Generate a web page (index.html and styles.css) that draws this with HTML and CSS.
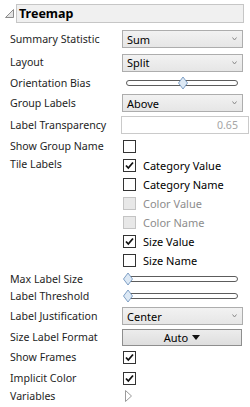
FILE: index.html
```html
<!DOCTYPE html>
<html lang="en">
<head>
  <meta charset="UTF-8">
  <meta name="viewport" content="width=device-width, initial-scale=1.0">
  <title>Treemap options</title>
  <link rel="stylesheet" href="styles.css">
</head>
<body>
  <div class="panel">
    <div class="header">
      <svg class="disclose" width="9" height="9" viewBox="0 0 9 9"><path d="M8.5 0.5 L8.5 8.5 L0.5 8.5 Z" fill="#e4e4e4" stroke="#8c8c8c"/></svg>
      <div class="title">Treemap</div>
    </div>

    <div class="rows">
      <div class="row h24">
        <span class="label">Summary Statistic</span>
        <div class="select">Sum<svg class="chev" width="5" height="4" viewBox="0 0 5 4"><path d="M0.5 0.5 L2.5 3 L4.5 0.5" fill="none" stroke="#8a8a8a"/></svg></div>
      </div>
      <div class="row h23">
        <span class="label">Layout</span>
        <div class="select">Split<svg class="chev" width="5" height="4" viewBox="0 0 5 4"><path d="M0.5 0.5 L2.5 3 L4.5 0.5" fill="none" stroke="#8a8a8a"/></svg></div>
      </div>
      <div class="row h18">
        <span class="label">Orientation Bias</span>
        <div class="slider"><span class="thumb" style="left: 50%"></span></div>
      </div>
      <div class="row h22">
        <span class="label">Group Labels</span>
        <div class="select">Above<svg class="chev" width="5" height="4" viewBox="0 0 5 4"><path d="M0.5 0.5 L2.5 3 L4.5 0.5" fill="none" stroke="#8a8a8a"/></svg></div>
      </div>
      <div class="row h22">
        <span class="label">Label Transparency</span>
        <div class="text-input">0.65</div>
      </div>
      <div class="row h20">
        <span class="label">Show Group Name</span>
        <div class="check"><span class="box"></span></div>
      </div>
      <div class="row tile">
        <span class="label">Tile Labels</span>
        <div class="check-list">
          <div class="check"><span class="box"><svg width="11" height="11" viewBox="0 0 11 11"><path d="M2 5.5 L4.3 8 L9 2.5" fill="none" stroke="#111" stroke-width="1.8"/></svg></span>Category Value</div>
          <div class="check"><span class="box"></span>Category Name</div>
          <div class="check off"><span class="box"></span>Color Value</div>
          <div class="check off"><span class="box"></span>Color Name</div>
          <div class="check"><span class="box"><svg width="11" height="11" viewBox="0 0 11 11"><path d="M2 5.5 L4.3 8 L9 2.5" fill="none" stroke="#111" stroke-width="1.8"/></svg></span>Size Value</div>
          <div class="check"><span class="box"></span>Size Name</div>
        </div>
      </div>
      <div class="row h18">
        <span class="label">Max Label Size</span>
        <div class="slider"><span class="thumb" style="left: 0%"></span></div>
      </div>
      <div class="row h16">
        <span class="label">Label Threshold</span>
        <div class="slider"><span class="thumb" style="left: 0%"></span></div>
      </div>
      <div class="row h24">
        <span class="label">Label Justification</span>
        <div class="select">Center<svg class="chev" width="5" height="4" viewBox="0 0 5 4"><path d="M0.5 0.5 L2.5 3 L4.5 0.5" fill="none" stroke="#8a8a8a"/></svg></div>
      </div>
      <div class="row h18">
        <span class="label">Size Label Format</span>
        <div class="button">Auto <svg width="8" height="5" viewBox="0 0 8 5"><path d="M0 0 L8 0 L4 5 Z" fill="#111"/></svg></div>
      </div>
      <div class="row h23">
        <span class="label">Show Frames</span>
        <div class="check"><span class="box"><svg width="11" height="11" viewBox="0 0 11 11"><path d="M2 5.5 L4.3 8 L9 2.5" fill="none" stroke="#111" stroke-width="1.8"/></svg></span></div>
      </div>
      <div class="row h18">
        <span class="label">Implicit Color</span>
        <div class="check"><span class="box"><svg width="11" height="11" viewBox="0 0 11 11"><path d="M2 5.5 L4.3 8 L9 2.5" fill="none" stroke="#111" stroke-width="1.8"/></svg></span></div>
      </div>
      <div class="row h18">
        <span class="label">Variables</span>
        <svg class="expand" width="7" height="12" viewBox="0 0 7 12"><path d="M0.5 0.5 L6.5 6 L0.5 11.5 Z" fill="#fff" stroke="#9a9a9a"/></svg>
      </div>
    </div>
  </div>
</body>
</html>
```

FILE: styles.css
```css
body {
  margin: 0;
  background: #fff;
  font-family: "Noto Sans", sans-serif;
  font-size: 10.6px;
  color: #1e1e1e;
}
.panel {
  width: 250px;
}
.header {
  display: flex;
  align-items: center;
  margin: 4px 0 0 5px;
}
.disclose {
  flex: none;
}
.title {
  box-sizing: border-box;
  width: 228px;
  height: 19px;
  margin-left: 2px;
  padding-left: 2px;
  border: 1px solid #c6c6c6;
  background: #f0f0f0;
  font-weight: bold;
  font-size: 12.5px;
  line-height: 17px;
  color: #000;
}
.rows {
  margin-top: 4px;
  padding-left: 10px;
}
.row {
  display: grid;
  grid-template-columns: 112px 127px;
  align-items: center;
}
.h16 { height: 16px; }
.h18 { height: 18px; }
.h20 { height: 20px; }
.h22 { height: 22px; }
.h23 { height: 23px; }
.h24 { height: 24px; }
.label {
  white-space: nowrap;
  line-height: 15px;
}
.select {
  box-sizing: border-box;
  display: flex;
  align-items: center;
  justify-content: space-between;
  width: 121px;
  height: 18px;
  padding: 0 5px 0 4px;
  border: 1px solid #adadad;
  background: linear-gradient(#f2f2f2, #e6e6e6);
  color: #000;
  font-size: 11px;
}
.slider {
  position: relative;
  box-sizing: border-box;
  width: 112px;
  height: 6px;
  margin-left: 4px;
  border: 1px solid #5c5c5c;
  border-radius: 3px;
  background: #fff;
}
.thumb {
  position: absolute;
  top: 50%;
  width: 10px;
  height: 13px;
  margin-left: 1px;
  transform: translate(-50%, -50%);
  background: no-repeat center/10px 13px url("data:image/svg+xml,%3Csvg xmlns='http://www.w3.org/2000/svg' width='10' height='13' viewBox='0 0 10 13'%3E%3Cpath d='M5 0.5 L9.5 6.5 L5 12.5 L0.5 6.5 Z' fill='%23dde9f5' stroke='%237e9fc4'/%3E%3C/svg%3E");
}
.text-input {
  box-sizing: border-box;
  width: 128px;
  height: 18px;
  margin-left: -1px;
  padding-right: 10px;
  border: 1px solid #cacaca;
  background: #fff;
  color: #a6a6a6;
  text-align: right;
  line-height: 16px;
}
.check {
  display: flex;
  align-items: center;
  height: 19px;
  white-space: nowrap;
  color: #000;
  font-size: 11px;
}
.row > .check {
  height: auto;
}
.box {
  box-sizing: border-box;
  display: flex;
  align-items: center;
  justify-content: center;
  width: 13px;
  height: 13px;
  margin: 0 7px 0 1px;
  border: 1px solid #333;
  background: #fff;
}
.check.off {
  color: #8d8d8d;
}
.check.off .box {
  border-color: #c4c4c4;
  background: #e8e8e8;
}
.tile {
  align-items: start;
}
.tile .label {
  margin-top: 1px;
}
.button {
  box-sizing: border-box;
  display: flex;
  align-items: center;
  justify-content: center;
  gap: 4px;
  width: 120px;
  height: 17px;
  border: 1px solid #8e8e8e;
  background: linear-gradient(#ececec, #dedede);
  color: #000;
  font-size: 11px;
}
.expand {
  margin-left: 3px;
}
```
